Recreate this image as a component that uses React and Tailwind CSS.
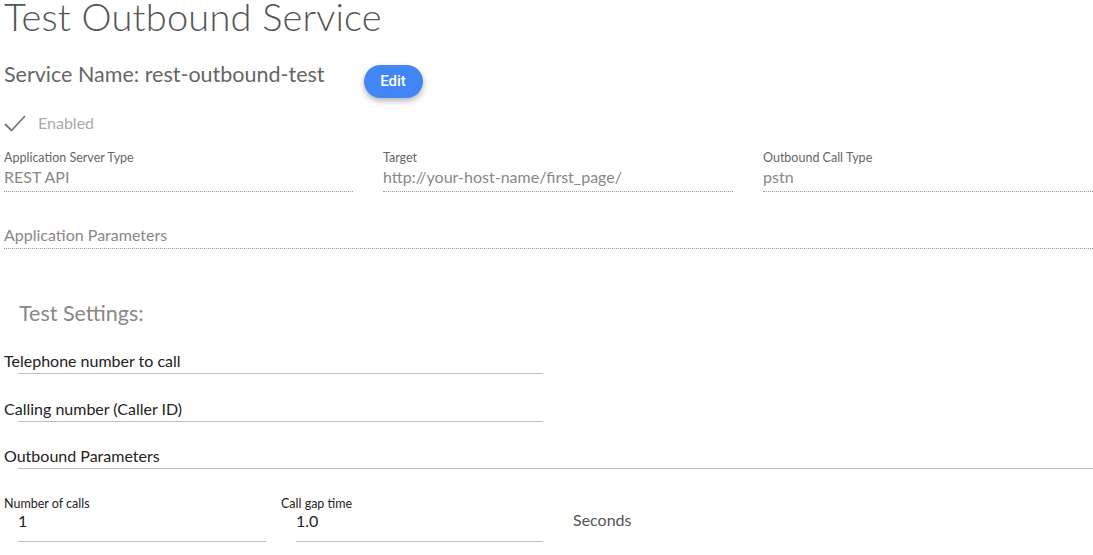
import React from "react";

const font = { fontFamily: "Lato, 'Open Sans', sans-serif" };

function InfoField({ label, value }) {
  return (
    <div className="border-b border-dotted border-[#9a9a9a] pb-[4px]">
      <div className="text-[12.5px] leading-[16px] text-[#666]">{label}</div>
      <div className="text-[16px] leading-[20px] text-[#888] mt-[1px]">{value}</div>
    </div>
  );
}

function LineField({ label, width = "w-[525px]", gap = "mt-[26px]" }) {
  return (
    <div className={gap}>
      <div className="text-[16px] leading-[20px] text-[#222]">{label}</div>
      <div className={`ml-[14px] ${width} border-b border-[#bdbdbd] mt-[2px]`} />
    </div>
  );
}

export default function App() {
  return (
    <div className="bg-white min-h-screen pl-[4px] overflow-hidden" style={font}>
      <h1 className="text-[38px] leading-[32px] font-light text-[#555] tracking-[0.2px]">
        Test Outbound Service
      </h1>

      <div className="flex items-start mt-[29px]">
        <div className="text-[21.5px] leading-[26px] text-[#666]">
          Service Name: rest-outbound-test
        </div>
        <button
          className="ml-[39px] mt-[4px] h-[33px] w-[59px] rounded-full bg-[#4285f4] text-white text-[15px] font-medium shadow-[0_3px_6px_rgba(0,0,0,0.3)]"
          style={{ fontFamily: "Roboto, Arial, sans-serif" }}
        >
          Edit
        </button>
      </div>

      <div className="flex items-center mt-[13px]">
        <svg width="22" height="18" viewBox="0 0 22 18" fill="none">
          <path d="M1 10 L7.5 16.5 L21 2" stroke="#777" strokeWidth="1.8" />
        </svg>
        <span className="ml-[12px] text-[16px] text-[#aaa]">Enabled</span>
      </div>

      <div className="grid grid-cols-[349px_350px_1fr] gap-[30px] mt-[15px]">
        <InfoField label="Application Server Type" value="REST API" />
        <InfoField label="Target" value="http://your-host-name/first_page/" />
        <InfoField label="Outbound Call Type" value="pstn" />
      </div>

      <div className="mt-[33px] border-b border-dotted border-[#9a9a9a] pb-[3px]">
        <div className="text-[16px] leading-[20px] text-[#888]">Application Parameters</div>
      </div>

      <div className="ml-[15px] mt-[52px] text-[21.5px] leading-[24px] text-[#888]">
        Test Settings:
      </div>

      <LineField label="Telephone number to call" />
      <LineField label="Calling number (Caller ID)" gap="mt-[25px]" />
      <LineField label="Outbound Parameters" width="w-auto" gap="mt-[24px]" />

      <div className="flex items-end mt-[27px]">
        <div className="w-[262px]">
          <div className="text-[12.5px] leading-[16px] text-[#222]">Number of calls</div>
          <div className="ml-[14px] border-b border-[#bdbdbd] pb-[10px] -mt-[1px] text-[16px] leading-[20px] text-[#222]">
            1
          </div>
        </div>
        <div className="w-[262px] ml-[15px]">
          <div className="text-[12.5px] leading-[16px] text-[#222]">Call gap time</div>
          <div className="ml-[15px] border-b border-[#bdbdbd] pb-[10px] -mt-[1px] text-[16px] leading-[20px] text-[#222]">
            1.0
          </div>
        </div>
        <div className="ml-[30px] mb-[12px] text-[16px] leading-[20px] text-[#555]">Seconds</div>
      </div>
    </div>
  );
}
